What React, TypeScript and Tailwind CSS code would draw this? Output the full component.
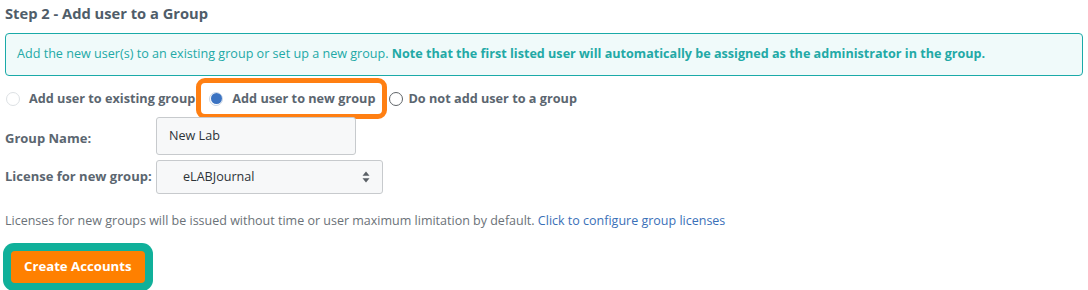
const labelCls = "w-[151px] shrink-0 text-[13px] font-bold text-[#5b6670]";

function SortArrows() {
  return (
    <svg width="8" height="12" viewBox="0 0 8 12" className="text-[#5a6066]">
      <path d="M4 0.5 L7.5 4.8 H0.5 Z" fill="currentColor" />
      <path d="M4 11.5 L7.5 7.2 H0.5 Z" fill="currentColor" />
    </svg>
  );
}

export default function App() {
  return (
    <main
      className="h-[290px] w-[1088px] bg-white"
      style={{ fontFamily: '"Open Sans", "Noto Sans", sans-serif' }}
    >
      <div className="pl-[5px] pr-[5px]">
        <h2 className="pt-[3px] text-[14.7px] font-bold leading-[20px] text-[#4f5d69]">
          Step 2 - Add user to a Group
        </h2>

        <div className="mt-[10px] flex h-[43px] items-center rounded-[4px] border border-[#1aaaa8] bg-[#f0fafa] px-[11px] text-[12.6px] text-[#22a9a6]">
          <p>
            Add the new user(s) to an existing group or set up a new group.{" "}
            <b>
              Note that the first listed user will automatically be assigned as
              the administrator in the group.
            </b>
          </p>
        </div>

        <div className="mt-[2px] flex h-[41px] items-center text-[12.7px] font-bold text-[#5b6670]">
          <span className="ml-[1px] h-[14px] w-[14px] rounded-full border border-[#dde1e4] bg-white" />
          <span className="ml-[9px]">Add user to existing group</span>
          <div className="ml-[1px] flex h-[41px] items-center rounded-[9px] border-[5px] border-[#ff7f12] pl-[8px] pr-[7px]">
            <span className="flex h-[14px] w-[14px] items-center justify-center rounded-full border border-[#c9d6e6] bg-white">
              <span className="h-[11px] w-[11px] rounded-full bg-[#3b73c2]" />
            </span>
            <span className="ml-[9px]">Add user to new group</span>
          </div>
          <span className="ml-[2px] h-[14px] w-[14px] rounded-full border-[1.5px] border-[#5f6468] bg-white" />
          <span className="ml-[5px]">Do not add user to a group</span>
        </div>

        <div className="mt-[-2px] flex items-center">
          <span className={`${labelCls} pt-[6px]`}>Group Name:</span>
          <div className="flex h-[38px] w-[200px] items-center rounded-[3px] border border-[#c7cacd] bg-[#f7f8f9] px-[12px] text-[12.6px] text-[#2d3338]">
            New Lab
          </div>
        </div>

        <div className="mt-[5px] flex items-center">
          <span className={labelCls}>License for new group:</span>
          <div className="flex h-[34px] w-[227px] items-center justify-between rounded-[3px] border border-[#c7cacd] bg-[#f7f8f9] pl-[26px] pr-[12px] text-[12.6px] text-[#2d3338]">
            <span>eLABJournal</span>
            <SortArrows />
          </div>
        </div>

        <p className="mt-[18px] text-[12.5px] text-[#6b7278]">
          Licenses for new groups will be issued without time or user maximum
          limitation by default.{" "}
          <a className="text-[#3a70b8]" href="#">
            Click to configure group licenses
          </a>
        </p>

        <div className="mt-[12px] ml-[-2px] inline-flex rounded-[11px] bg-[#10b09a] p-[8px]">
          <button className="h-[32px] rounded-[4px] bg-[#ff8000] px-[13px] text-[13.2px] font-bold text-white">
            Create Accounts
          </button>
        </div>
      </div>
    </main>
  );
}
